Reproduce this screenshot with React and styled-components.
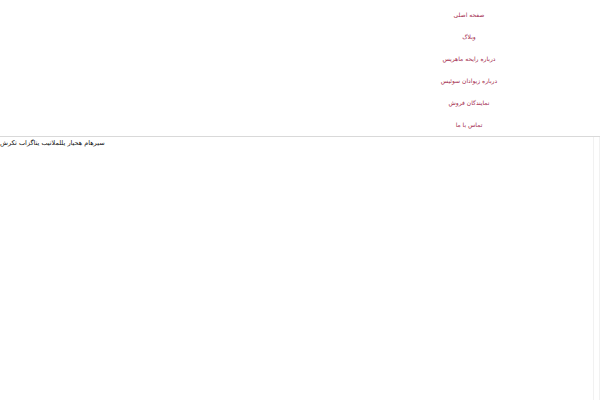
import React from "react";
import styled, { createGlobalStyle } from "styled-components";

const Global = createGlobalStyle`
  html, body {
    margin: 0;
    padding: 0;
    background: #fff;
    font-family: "DejaVu Sans", "Noto Sans", sans-serif;
  }
`;

const Page = styled.div`
  width: 600px;
  height: 400px;
  display: flex;
  flex-direction: column;
  overflow: hidden;
`;

const Menu = styled.ul`
  list-style: none;
  margin: 0 61px 0 auto;
  padding: 4px 0 0;
  width: 140px;
  direction: rtl;
`;

const MenuItem = styled.li`
  height: 22px;
  line-height: 22px;
  text-align: center;
  font-size: 6px;
  color: #a3294d;
`;

const Frame = styled.div`
  flex: 1;
  border-top: 1px solid #d9d9d9;
  display: flex;
  justify-content: space-between;
`;

const Caption = styled.div`
  font-size: 6.5px;
  line-height: 12px;
  color: #111;
  white-space: nowrap;
`;

const Rails = styled.div`
  display: flex;
  gap: 5px;
  height: 100%;
`;

const Rail = styled.div`
  width: 1px;
  height: 100%;
  background: #f1f1f1;
`;

const items = [
  "صفحه اصلی",
  "وبلاگ",
  "درباره رایحه ماهریس",
  "درباره زیوادان سوئیس",
  "نمایندگان فروش",
  "تماس با ما",
];

export default function App() {
  return (
    <Page>
      <Global />
      <Menu>
        {items.map((t) => (
          <MenuItem key={t}>{t}</MenuItem>
        ))}
      </Menu>
      <Frame>
        <Caption>سیرهام هحیار یللملاتیب یتاگزاب تکرش</Caption>
        <Rails>
          <Rail />
          <Rail />
        </Rails>
      </Frame>
    </Page>
  );
}
